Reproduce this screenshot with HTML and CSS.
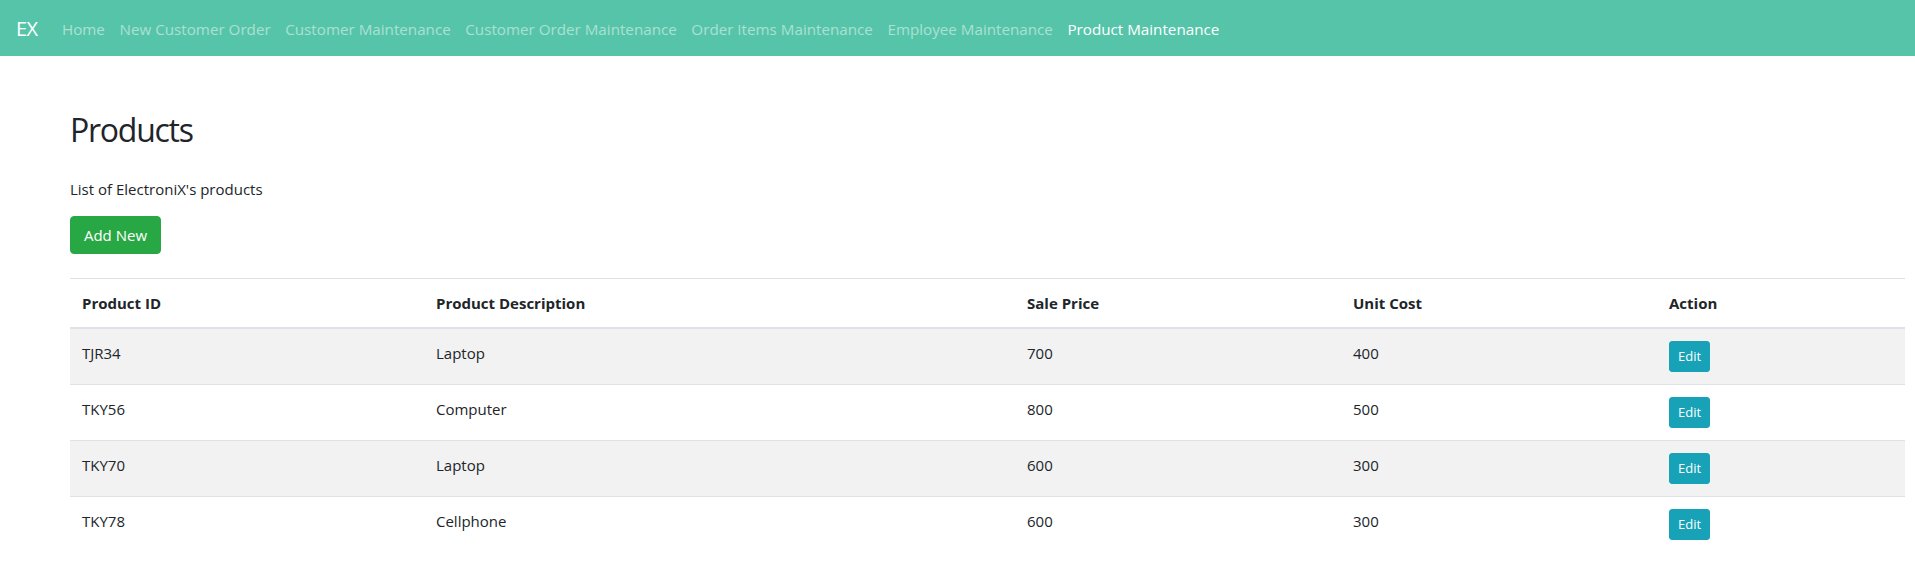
FILE: index.html
```html
<!DOCTYPE html>
<html lang="en">
<head>
<meta charset="utf-8">
<title>Products</title>
<link rel="stylesheet" href="styles.css">
</head>
<body>
<nav class="navbar">
  <a class="brand" href="#">EX</a>
  <ul class="nav">
    <li><a class="nav-link" href="#">Home</a></li>
    <li><a class="nav-link" href="#">New Customer Order</a></li>
    <li><a class="nav-link" href="#">Customer Maintenance</a></li>
    <li><a class="nav-link" href="#">Customer Order Maintenance</a></li>
    <li><a class="nav-link" href="#">Order Items Maintenance</a></li>
    <li><a class="nav-link" href="#">Employee Maintenance</a></li>
    <li><a class="nav-link active" href="#">Product Maintenance</a></li>
  </ul>
</nav>
<main class="content">
  <h1 class="title">Products</h1>
  <p class="lead-text">List of ElectroniX's products</p>
  <a class="btn btn-success" href="#">Add New</a>
  <table class="table">
    <colgroup>
      <col class="c1"><col class="c2"><col class="c3"><col class="c4"><col class="c5">
    </colgroup>
    <thead>
      <tr><th>Product ID</th><th>Product Description</th><th>Sale Price</th><th>Unit Cost</th><th>Action</th></tr>
    </thead>
    <tbody>
      <tr class="odd"><td>TJR34</td><td>Laptop</td><td>700</td><td>400</td><td><a class="btn btn-info btn-sm" href="#">Edit</a></td></tr>
      <tr><td>TKY56</td><td>Computer</td><td>800</td><td>500</td><td><a class="btn btn-info btn-sm" href="#">Edit</a></td></tr>
      <tr class="odd"><td>TKY70</td><td>Laptop</td><td>600</td><td>300</td><td><a class="btn btn-info btn-sm" href="#">Edit</a></td></tr>
      <tr><td>TKY78</td><td>Cellphone</td><td>600</td><td>300</td><td><a class="btn btn-info btn-sm" href="#">Edit</a></td></tr>
    </tbody>
  </table>
</main>
</body>
</html>
```
FILE: styles.css
```css
* { box-sizing: border-box; }
html, body {
  margin: 0;
  padding: 0;
  background: #fff;
  color: #212529;
  font-family: "Open Sans", "Noto Sans", sans-serif;
  font-size: 16px;
  line-height: 1.5;
}
a { text-decoration: none; }

.navbar {
  display: flex;
  align-items: center;
  height: 56px;
  padding: 9px 16px 7px;
  background: #56c4a8;
}
.brand {
  color: #fff;
  font-size: 20px;
  line-height: 30px;
  margin-right: 17px;
  letter-spacing: -0.5px;
}
.nav {
  display: flex;
  list-style: none;
  margin: 0;
  padding: 0;
}
.nav-link {
  display: block;
  padding: 8px 7.3px;
  color: rgba(255,255,255,0.5);
  font-size: 15.2px;
}
.nav-link.active { color: #fff; }

.content {
  padding: 50px 10px 0 70px;
}
.title {
  margin: 0 0 23px;
  font-size: 32px;
  font-weight: 400;
  line-height: 48px;
  letter-spacing: -1.25px;
}
.lead-text {
  margin: 0 0 15px;
  font-size: 15px;
  line-height: 24px;
}
.btn {
  display: inline-block;
  border: 1px solid transparent;
  border-radius: 4px;
  color: #fff;
  text-align: center;
  vertical-align: middle;
}
.btn-success {
  background: #28a745;
  border-color: #28a745;
  width: 91px;
  height: 38px;
  padding: 6px 0;
  font-size: 15px;
  line-height: 24px;
}
.btn-info {
  background: #17a2b8;
  border-color: #17a2b8;
}
.btn-sm {
  width: 41px;
  height: 31px;
  padding: 4px 0;
  font-size: 13px;
  line-height: 21px;
  border-radius: 3px;
}

.table {
  width: 100%;
  margin-top: 24px;
  border-collapse: collapse;
  table-layout: fixed;
  font-size: 15px;
}
.c1 { width: 354px; }
.c2 { width: 591px; }
.c3 { width: 326px; }
.c4 { width: 316px; }
.c5 { width: auto; }
.table th, .table td {
  padding: 12px;
  text-align: left;
  vertical-align: top;
  border-top: 1px solid #dee2e6;
  line-height: 24px;
}
.table th {
  font-weight: 700;
  border-bottom: 2px solid #dee2e6;
}
.table tbody tr:last-child td { border-bottom: none; }
.odd { background: #f2f2f2; }
```
